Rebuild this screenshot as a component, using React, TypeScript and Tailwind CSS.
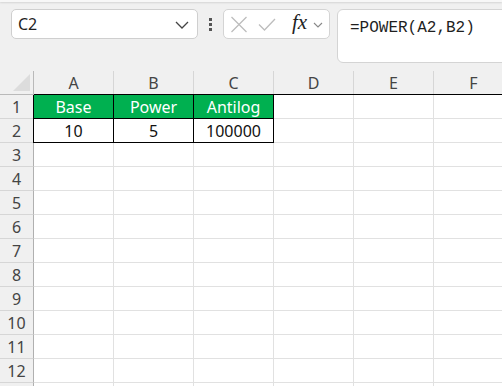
import React from "react";

const COLS = ["A", "B", "C", "D", "E", "F"];
const ROWS = Array.from({ length: 13 }, (_, i) => i + 1);

type CellDef = { text?: string; kind?: "head" | "data" };

function cellFor(r: number, c: number): CellDef {
  if (r === 1 && c < 3) return { text: ["Base", "Power", "Antilog"][c], kind: "head" };
  if (r === 2 && c < 3) return { text: ["10", "5", "100000"][c], kind: "data" };
  return {};
}

export default function App() {
  return (
    <div
      className="w-[502px] h-[386px] overflow-hidden bg-[#f0f0f0] relative"
      style={{ fontFamily: '"Noto Sans", "Open Sans", sans-serif' }}
    >
      <div className="h-[2px] bg-[#f7f7f7] shadow-[0_1px_2px_rgba(0,0,0,0.12)]" />
      {/* Formula bar */}
      <div className="flex items-start pt-[7px]">
        <div className="ml-[11px] w-[187px] h-[30px] bg-white border border-[#cfcfcf] rounded-[5px] flex items-center justify-between pl-[6px] pr-[8px]">
          <span className="text-[16px] text-[#1f1f1f] leading-none">C2</span>
          <svg width="14" height="8" viewBox="0 0 14 8" className="mt-[2px]">
            <path d="M1 1 L7 7 L13 1" fill="none" stroke="#444" strokeWidth="1.3" />
          </svg>
        </div>
        <div className="w-[25px] h-[30px] flex flex-col items-center justify-center gap-[2px]">
          <div className="w-[3px] h-[3px] bg-[#555]" />
          <div className="w-[3px] h-[3px] bg-[#555]" />
          <div className="w-[3px] h-[3px] bg-[#555]" />
        </div>
        <div className="w-[107px] h-[30px] bg-white border border-[#d4d4d4] rounded-[5px] flex items-center pl-[6px]">
          <svg width="18" height="17" viewBox="0 0 18 17">
            <path d="M1.5 1 L16.5 16 M16.5 1 L1.5 16" stroke="#bdbdbd" strokeWidth="1.3" fill="none" />
          </svg>
          <svg width="18" height="13" viewBox="0 0 18 13" className="ml-[10px]">
            <path d="M1 6.5 L6.5 12 L17 1" stroke="#bdbdbd" strokeWidth="1.3" fill="none" />
          </svg>
          <span
            className="ml-[16px] text-[21px] italic text-[#222] leading-none -mt-[3px]"
            style={{ fontFamily: '"Liberation Serif", "DejaVu Serif", serif' }}
          >
            fx
          </span>
          <svg width="10" height="6" viewBox="0 0 10 6" className="ml-[6px] mt-[1px]">
            <path d="M1 1 L5 5 L9 1" fill="none" stroke="#888" strokeWidth="1.1" />
          </svg>
        </div>
        <div className="ml-[7px] flex-1 -mr-[10px] h-[54px] bg-white border border-[#d4d4d4] rounded-[6px] pl-[12px] pt-[4px]">
          <span
            className="text-[16px] leading-[22px] text-[#1f1f1f]"
            style={{ fontFamily: '"Liberation Mono", "DejaVu Sans Mono", monospace' }}
          >
            =POWER(A2,B2)
          </span>
        </div>
      </div>

      {/* Grid */}
      <div className="mt-[8px]">
        {/* header row */}
        <div className="flex h-[24px]">
          <div className="w-[34px] shrink-0 h-[24px] border-r border-b border-[#b9b9b9] relative">
            <svg width="18" height="18" viewBox="0 0 18 18" className="absolute right-[2px] bottom-[2px]">
              <path d="M17 0 L17 17 L0 17 Z" fill="#dcdcdc" />
            </svg>
          </div>
          {COLS.map((c) => (
            <div
              key={c}
              className="w-[80px] shrink-0 h-[24px] border-r border-r-[#d6d6d6] border-b border-b-[#b0b0b0] flex items-center justify-center text-[16px] text-[#444]"
            >
              {c}
            </div>
          ))}
        </div>
        {ROWS.map((r) => (
          <div key={r} className="flex h-[24px]">
            <div className="w-[34px] shrink-0 h-[24px] border-r border-r-[#b0b0b0] border-b border-b-[#d6d6d6] flex items-center justify-center text-[16px] text-[#444]">
              {r < 13 ? r : ""}
            </div>
            {COLS.map((c, ci) => {
              const d = cellFor(r, ci);
              const bordered = d.kind !== undefined;
              let shadow = "";
              if (r === 1 && ci === 0) shadow = "shadow-[0_-1px_0_#000,-1px_0_0_#000,-1px_-1px_0_#000]";
              else if (r === 1) shadow = "shadow-[0_-1px_0_#000]";
              else if (r === 2 && ci === 0) shadow = "shadow-[-1px_0_0_#000]";
              return (
                <div
                  key={c}
                  className={
                    "w-[80px] shrink-0 h-[24px] border-r border-b flex items-center justify-center text-[16px] " +
                    (bordered ? "border-black " : "border-[#e1e1e1] bg-white ") +
                    (d.kind === "head" ? "bg-[#00b050] text-white " : "") +
                    (d.kind === "data" ? "bg-white text-[#111] " : "") +
                    shadow
                  }
                >
                  {d.text}
                </div>
              );
            })}
          </div>
        ))}
      </div>
    </div>
  );
}
